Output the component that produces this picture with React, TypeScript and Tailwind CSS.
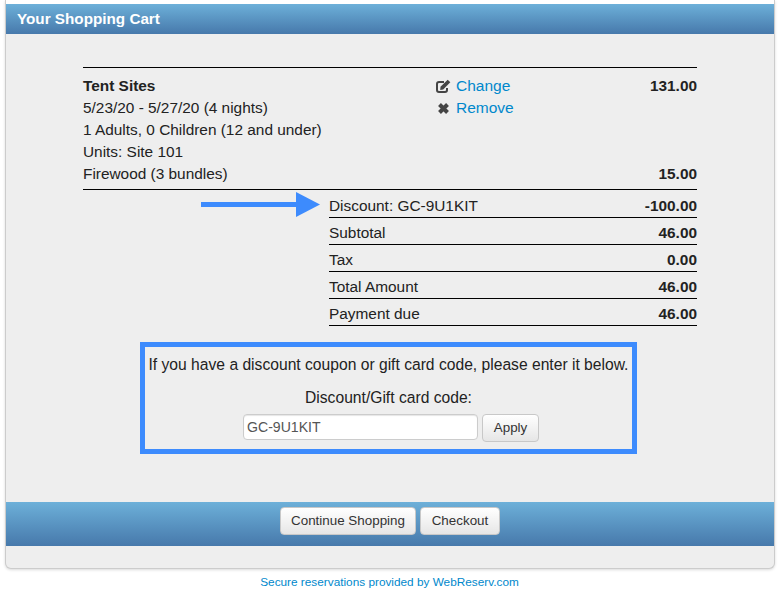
const rows = [
  { label: "Discount: GC-9U1KIT", amount: "-100.00" },
  { label: "Subtotal", amount: "46.00" },
  { label: "Tax", amount: "0.00" },
  { label: "Total Amount", amount: "46.00" },
  { label: "Payment due", amount: "46.00" },
];

function EditIcon() {
  return (
    <svg width="15" height="15" viewBox="0 0 15 15" fill="none" className="shrink-0">
      <path d="M11 9v2A2 2 0 0 1 9 13H3A2 2 0 0 1 1 11V5A2 2 0 0 1 3 3H8" stroke="#444" strokeWidth="2" />
      <path d="M4.500 7.800 11.700 0.800 14.300 3.300 7.200 10.500 4.200 10.900Z" fill="#444" />
    </svg>
  );
}

function RemoveIcon() {
  return (
    <svg width="15" height="15" viewBox="0 0 15 15" className="shrink-0">
      <path d="M3.500 3.500 11.500 11.500M11.500 3.500 3.500 11.500" stroke="#444" strokeWidth="4" />
    </svg>
  );
}

const barClass = "bg-gradient-to-b from-[#6db0d9] to-[#4779ab]";
const buttonClass =
  "rounded-[4px] border border-[#c8c8c8] bg-gradient-to-b from-white to-[#e6e6e6] text-[13.400px] text-[#333]";

export default function App() {
  return (
    <div className="min-h-[595px] bg-white text-[15.400px] text-[#222] [font-family:'Liberation_Sans',Arial,sans-serif]">
      <div className="ml-[5px] mr-[4px] flex h-[569px] flex-col rounded-b-[6px] border-x border-b border-[#ccc] bg-[#eeeeee] shadow-[0_1px_3px_rgba(0,0,0,0.15)]">
        <div className="h-1 bg-white" />
        <div className={`flex h-[30px] items-center px-[11px] text-[15.250px] font-bold text-white ${barClass}`}>
          Your Shopping Cart
        </div>

        <div className="ml-[77px] mt-[33px] w-[614px]">
          <div className="flex h-[123px] border-y border-black pt-[7px] leading-[22px]">
            <div className="w-[353px]">
              <div className="font-bold">Tent Sites</div>
              <div>5/23/20 - 5/27/20 (4 nights)</div>
              <div>1 Adults, 0 Children (12 and under)</div>
              <div>Units: Site 101</div>
              <div>Firewood (3 bundles)</div>
            </div>
            <div className="w-[150px] text-[15.500px] text-[#0088cc]">
              <div className="flex items-center gap-[5px]">
                <EditIcon />
                Change
              </div>
              <div className="flex items-center gap-[5px]">
                <RemoveIcon />
                Remove
              </div>
            </div>
            <div className="flex flex-1 flex-col justify-between pb-[4px] text-right font-bold">
              <div>131.00</div>
              <div>15.00</div>
            </div>
          </div>

          <div className="flex">
            <div className="w-[246px] pl-[118px] pt-[2px]">
              <svg width="120" height="26" viewBox="0 0 120 26">
                <rect x="0" y="10" width="96" height="5" fill="#3d8bfd" />
                <path d="M95 0 119 12.500 95 25Z" fill="#3d8bfd" />
              </svg>
            </div>
            <div className="flex-1 pt-px">
              {rows.map((row) => (
                <div key={row.label} className="flex h-[27px] items-center justify-between border-b border-black pt-[4px]">
                  <span>{row.label}</span>
                  <span className="font-bold">{row.amount}</span>
                </div>
              ))}
            </div>
          </div>
        </div>

        <div className="ml-[134px] mt-[16px] flex h-[112px] w-[497px] flex-col items-center border-[5px] border-[#3d8bfd] pt-[8px] text-[15.650px]">
          <div className="whitespace-nowrap leading-[20px]">If you have a discount coupon or gift card code, please enter it below.</div>
          <div className="mt-[13px] leading-[20px]">Discount/Gift card code:</div>
          <div className="ml-[5px] mt-[6px] flex items-start gap-1">
            <input
              readOnly
              value="GC-9U1KIT"
              className="h-[26px] w-[235px] rounded-[4px] border border-[#ccc] bg-white px-[3px] text-[14.100px] text-[#555] shadow-[inset_0_1px_1px_rgba(0,0,0,0.1)]"
            />
            <button className={`h-[28px] w-[57px] ${buttonClass}`}>Apply</button>
          </div>
        </div>

        <div className={`mt-[48px] flex h-[44px] justify-center gap-1 pt-[5px] ${barClass}`}>
          <button className={`h-[28px] w-[136px] ${buttonClass}`}>Continue Shopping</button>
          <button className={`h-[28px] w-[80px] ${buttonClass}`}>Checkout</button>
        </div>
      </div>

      <div className="mt-[5px] text-center text-[11.800px] leading-[16px] text-[#0088cc]">
        Secure reservations provided by WebReserv.com
      </div>
    </div>
  );
}
